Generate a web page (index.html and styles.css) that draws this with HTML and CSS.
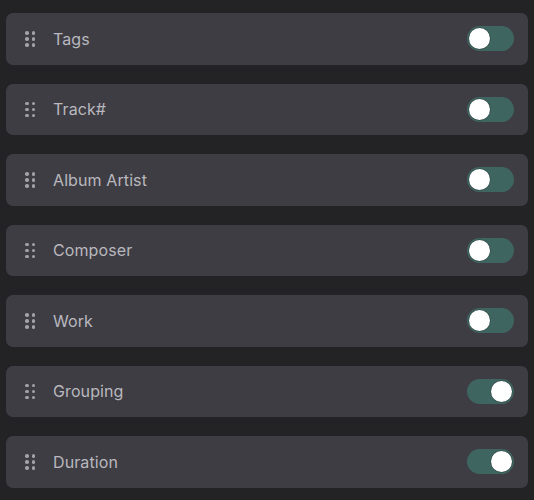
FILE: index.html
```html
<!DOCTYPE html>
<html lang="en">
    <head>
        <meta charset="UTF-8" />
        <meta name="viewport" content="width=device-width, initial-scale=1.0" />
        <title>Columns</title>
        <link rel="stylesheet" href="styles.css">
    </head>
    <body>
        <div class="list">
            <div class="row">
                <span class="grip"><i></i><i></i><i></i><i></i><i></i><i></i></span>
                <span class="label">Tags</span>
                <span class="toggle"></span>
            </div>
            <div class="row">
                <span class="grip"><i></i><i></i><i></i><i></i><i></i><i></i></span>
                <span class="label">Track#</span>
                <span class="toggle"></span>
            </div>
            <div class="row">
                <span class="grip"><i></i><i></i><i></i><i></i><i></i><i></i></span>
                <span class="label">Album Artist</span>
                <span class="toggle"></span>
            </div>
            <div class="row">
                <span class="grip"><i></i><i></i><i></i><i></i><i></i><i></i></span>
                <span class="label">Composer</span>
                <span class="toggle"></span>
            </div>
            <div class="row">
                <span class="grip"><i></i><i></i><i></i><i></i><i></i><i></i></span>
                <span class="label">Work</span>
                <span class="toggle"></span>
            </div>
            <div class="row">
                <span class="grip"><i></i><i></i><i></i><i></i><i></i><i></i></span>
                <span class="label">Grouping</span>
                <span class="toggle on"></span>
            </div>
            <div class="row">
                <span class="grip"><i></i><i></i><i></i><i></i><i></i><i></i></span>
                <span class="label">Duration</span>
                <span class="toggle on"></span>
            </div>
        </div>
    </body>
</html>
```

FILE: styles.css
```css
* {
    margin: 0;
    padding: 0;
    box-sizing: border-box;
}
body {
    font-family: Inter, "Noto Sans", sans-serif;
    background: #232325;
    height: 100vh;
}

.list {
    display: flex;
    flex-direction: column;
    gap: 19px;
    padding: 13px 6px 0;
}

.row {
    height: 51.5px;
    display: flex;
    align-items: center;
    background: #3e3d44;
    border-radius: 7px;
    padding: 0 14px 0 19px;
}

/* drag handle: 2 x 3 dots */
.grip {
    display: grid;
    grid-template-columns: repeat(2, 3.5px);
    gap: 2.5px 3px;
    width: 10px;
}
.grip i {
    width: 3.5px;
    height: 3.5px;
    border-radius: 50%;
    background: #a3a2aa;
}

.label {
    flex: 1;
    margin-left: 18px;
    font-size: 16px;
    color: #b9b8be;
    letter-spacing: 0.1px;
}

.toggle {
    position: relative;
    width: 47px;
    height: 25px;
    border-radius: 13px;
    background: #3f6560;
}
.toggle::after {
    content: "";
    position: absolute;
    top: 2px;
    left: 2px;
    width: 21px;
    height: 21px;
    border-radius: 50%;
    background: #fff;
    box-shadow: 0 0 0 0.5px rgba(0, 0, 0, 0.3);
}
.toggle.on::after {
    left: 24px;
}
```
